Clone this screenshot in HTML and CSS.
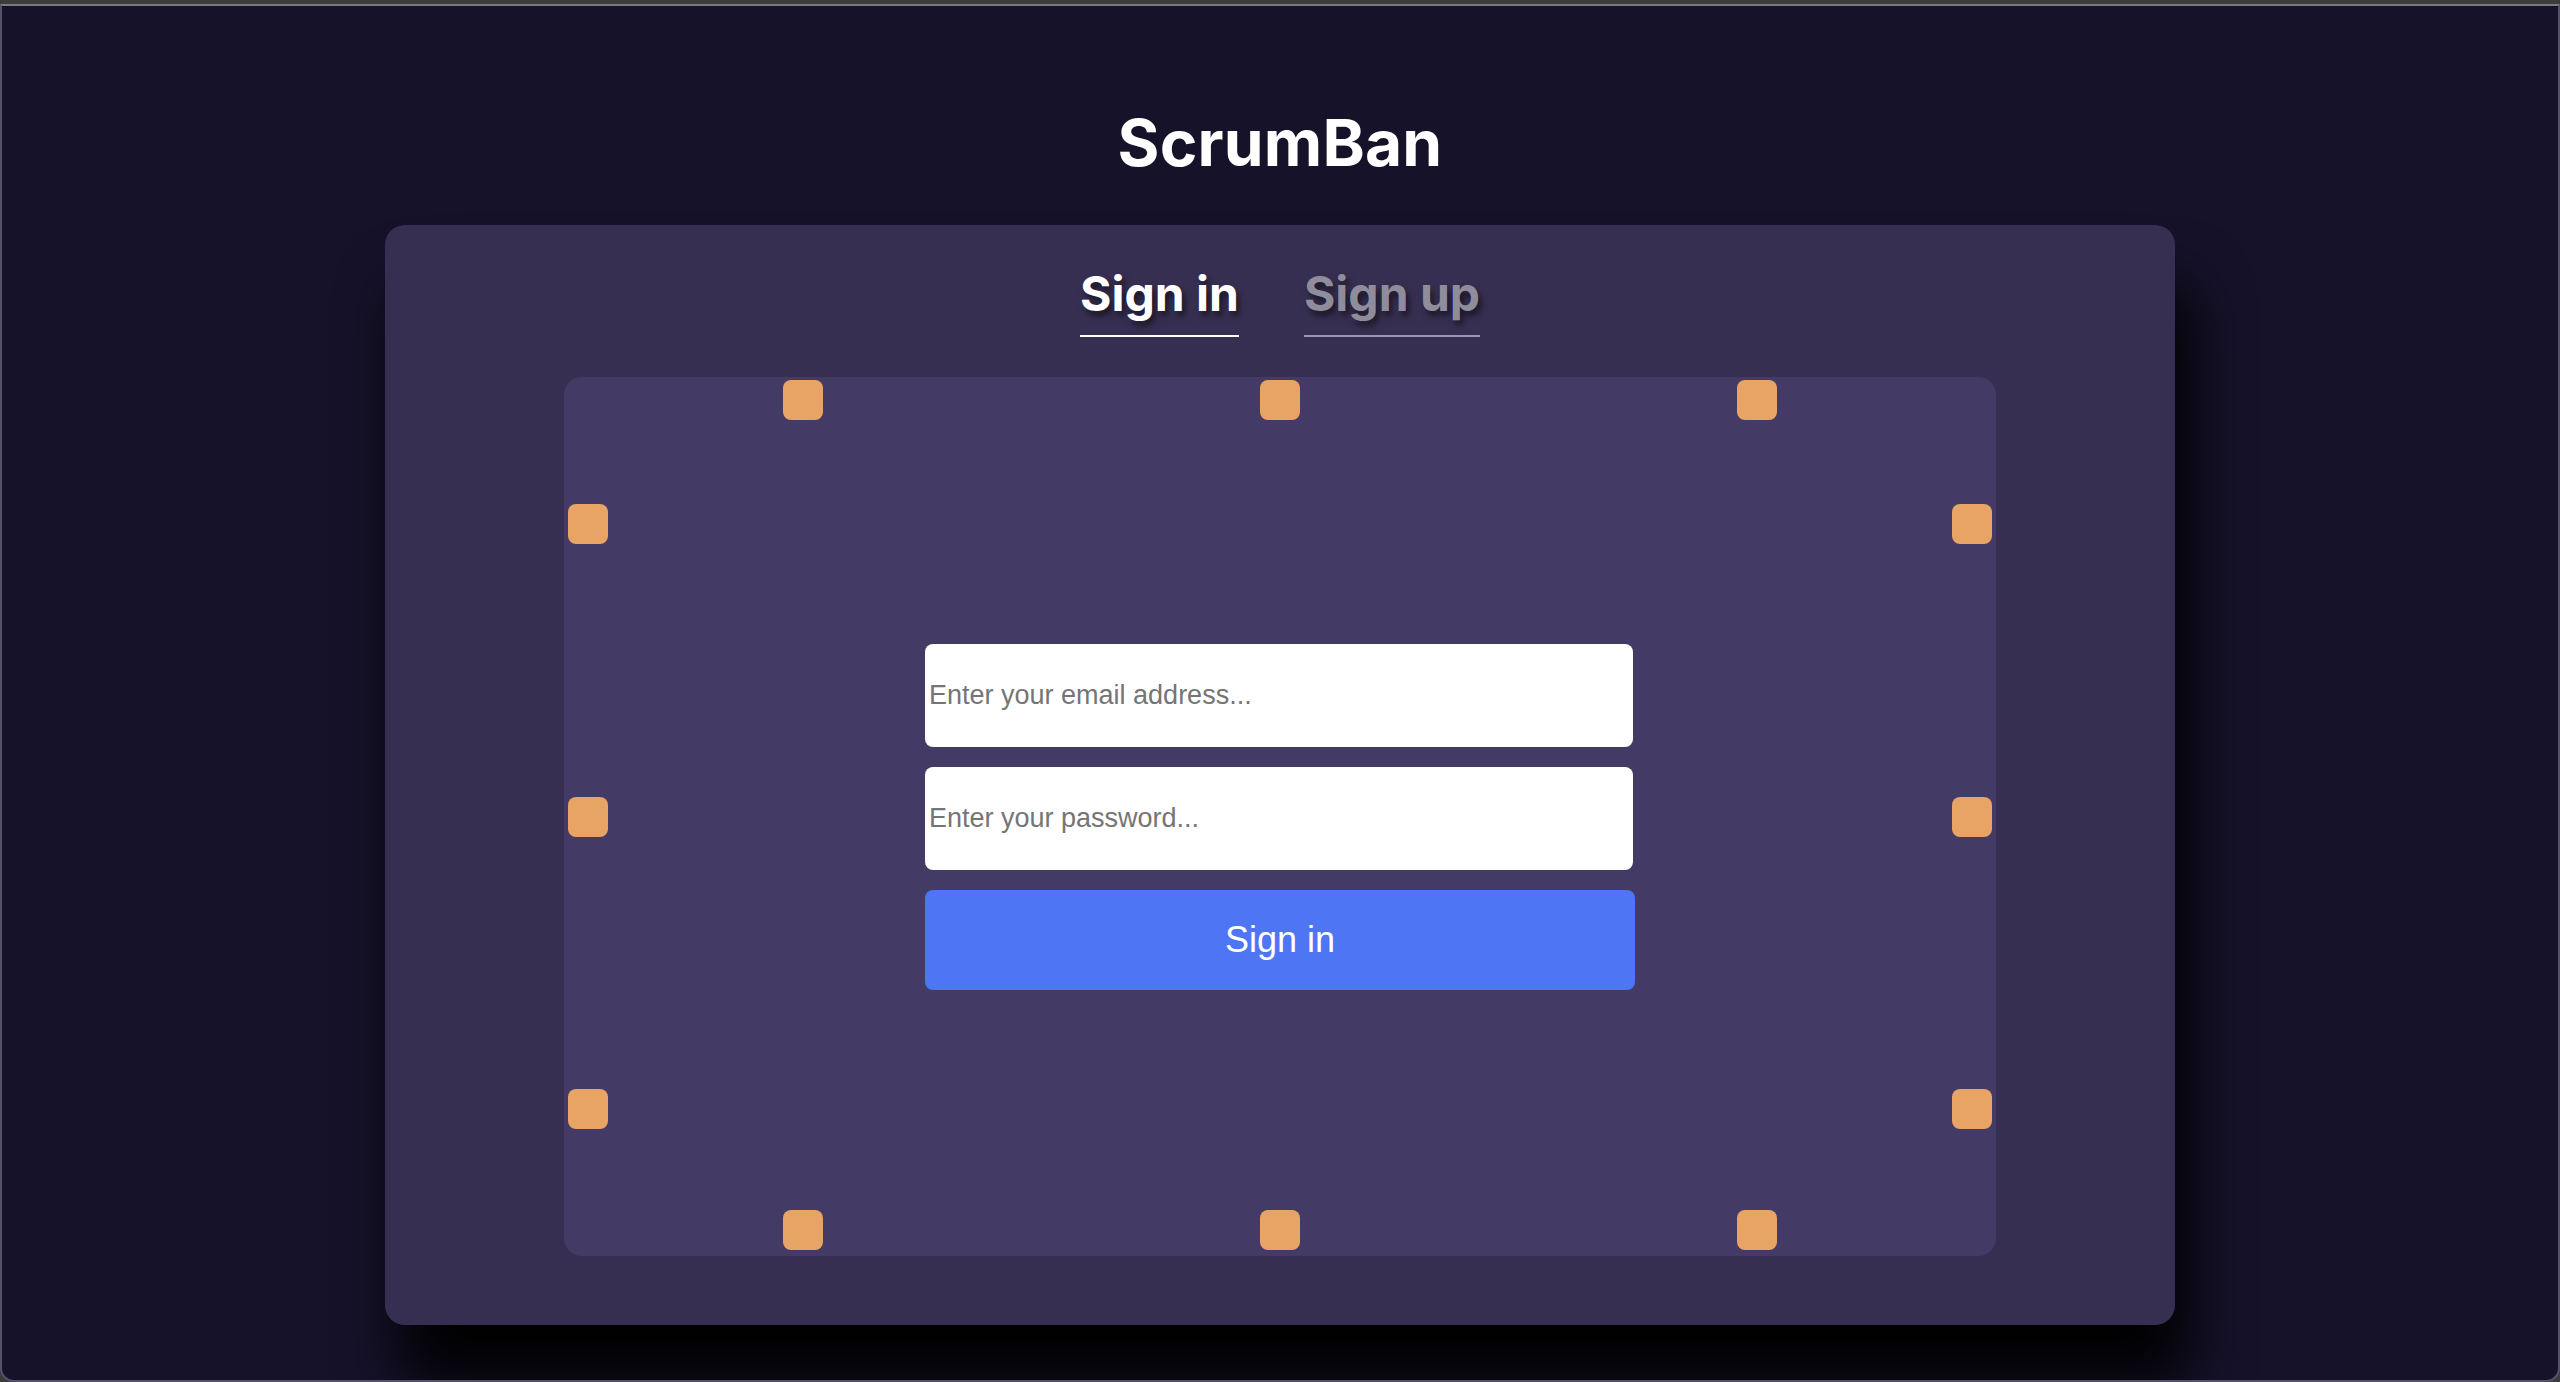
FILE: index.html
```html
<!DOCTYPE html>
<html lang="en">
<head>
<meta charset="utf-8">
<title>ScrumBan</title>
<link rel="stylesheet" href="styles.css">
</head>
<body>
<div class="window">
  <main class="page">
    <h1 class="title">ScrumBan</h1>
    <section class="card">
      <nav class="tabs">
        <span class="tab tab-active">Sign in</span>
        <span class="tab tab-inactive">Sign up</span>
      </nav>
      <div class="panel">
        <span class="dot dot-t1"></span>
        <span class="dot dot-t2"></span>
        <span class="dot dot-t3"></span>
        <span class="dot dot-b1"></span>
        <span class="dot dot-b2"></span>
        <span class="dot dot-b3"></span>
        <span class="dot dot-l1"></span>
        <span class="dot dot-l2"></span>
        <span class="dot dot-l3"></span>
        <span class="dot dot-r1"></span>
        <span class="dot dot-r2"></span>
        <span class="dot dot-r3"></span>
        <form class="form">
          <input class="field" type="email" placeholder="Enter your email address...">
          <input class="field" type="password" placeholder="Enter your password...">
          <button class="submit" type="button">Sign in</button>
        </form>
      </div>
    </section>
  </main>
</div>
</body>
</html>
```

FILE: styles.css
```css
html, body {
  margin: 0;
  height: 100%;
}

body {
  background: #3c3c3c;
  overflow: hidden;
}

.window {
  box-sizing: border-box;
  margin-top: 4px;
  height: calc(100% - 4px);
  background: #16122a;
  border-top: 2px solid #7a7a7a;
  border-left: 2px solid #55516a;
  border-right: 2px solid #55516a;
  border-bottom: 2px solid #55516a;
  border-radius: 0 0 14px 14px;
  overflow: hidden;
}

.page {
  display: flex;
  flex-direction: column;
  align-items: center;
  padding-top: 105px;
  font-family: Inter, "Noto Sans", sans-serif;
}

.title {
  margin: 0;
  font-size: 64px;
  line-height: 64px;
  font-weight: 700;
  color: #ffffff;
  letter-spacing: 0.2px;
}

.card {
  box-sizing: border-box;
  margin-top: 50px;
  width: 70%;
  height: 1100px;
  background: #372f51;
  border-radius: 20px;
  box-shadow: 15px 60px 60px rgba(0, 0, 0, 0.97);
  display: flex;
  flex-direction: column;
  align-items: center;
  padding-top: 45px;
}

.tabs {
  display: flex;
  gap: 65px;
}

.tab {
  display: inline-block;
  font-size: 48px;
  line-height: 48px;
  font-weight: 700;
  padding-bottom: 17px;
  border-bottom: 2px solid;
  text-shadow: 3px 5px 6px rgba(0, 0, 0, 0.55);
}

.tab-active {
  color: #ffffff;
  border-bottom-color: #ffffff;
}

.tab-inactive {
  color: #8f8c9c;
  border-bottom-color: #9b95b3;
}

.panel {
  position: relative;
  box-sizing: border-box;
  margin-top: 40px;
  width: 80%;
  height: 879px;
  background: #433b65;
  border-radius: 18px;
  display: flex;
  align-items: center;
  justify-content: center;
}

.dot {
  position: absolute;
  width: 40px;
  height: 40px;
  border-radius: 8px;
  background: #e8a465;
}

.dot-t1, .dot-t2, .dot-t3 { top: 3px; transform: translateX(-50%); }
.dot-b1, .dot-b2, .dot-b3 { bottom: 6px; transform: translateX(-50%); }
.dot-t1, .dot-b1 { left: 16.667%; }
.dot-t2, .dot-b2 { left: 50%; }
.dot-t3, .dot-b3 { left: 83.333%; }

.dot-l1, .dot-l2, .dot-l3 { left: 4px; transform: translateY(-50%); }
.dot-r1, .dot-r2, .dot-r3 { right: 4px; transform: translateY(-50%); }
.dot-l1, .dot-r1 { top: 16.667%; }
.dot-l2, .dot-r2 { top: 50%; }
.dot-l3, .dot-r3 { top: 83.333%; }

.form {
  display: flex;
  flex-direction: column;
  gap: 20px;
  width: 710px;
  margin: 0;
}

.field {
  box-sizing: border-box;
  width: 708px;
  height: 103px;
  border: none;
  border-radius: 8px;
  background: #ffffff;
  padding: 0 4px;
  font-family: "Liberation Sans", Arial, sans-serif;
  font-size: 27px;
  color: #222;
  outline: none;
}

.field::placeholder {
  color: #757575;
}

.submit {
  box-sizing: border-box;
  width: 710px;
  height: 100px;
  border: none;
  border-radius: 8px;
  background: #4e76f4;
  color: #ffffff;
  font-family: "Liberation Sans", Arial, sans-serif;
  font-size: 36px;
  cursor: pointer;
}
```
